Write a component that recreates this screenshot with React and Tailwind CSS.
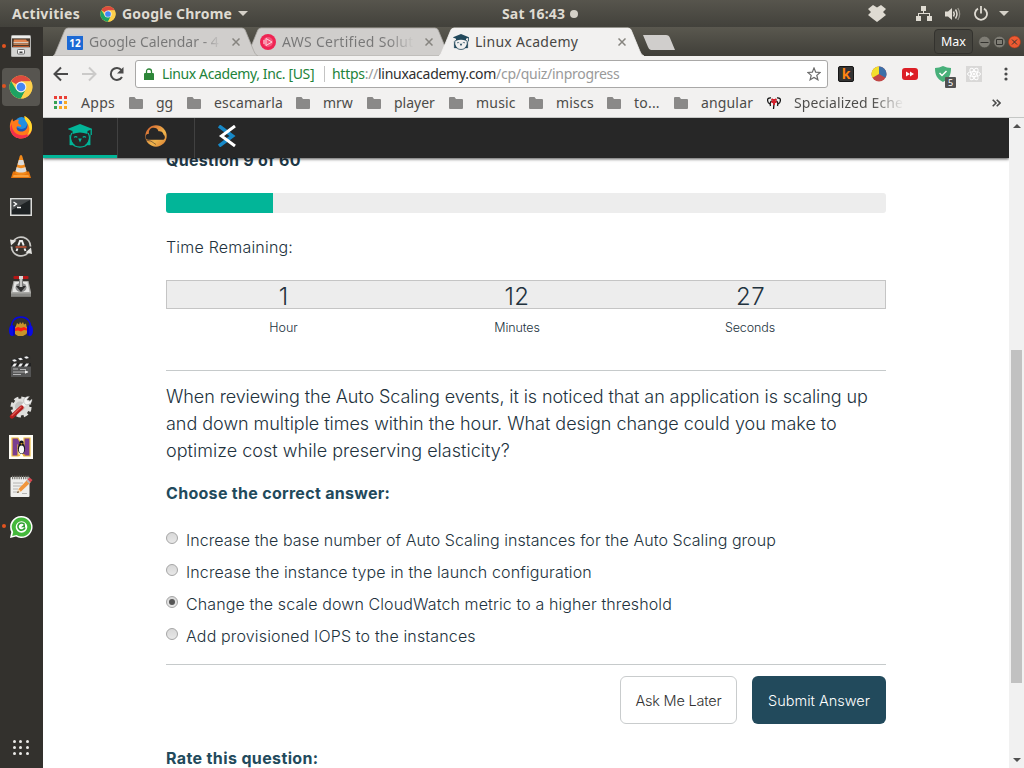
import React from "react";

const ui = "font-['Noto_Sans','Open_Sans',sans-serif]";

function ChromeIcon({ className }) {
  return (
    <svg viewBox="0 0 24 24" className={className}>
      <circle cx="12" cy="12" r="11.500" fill="#fdd04b" />
      <path d="M12 12 2.040 6.250A11.500 11.500 0 0 1 21.960 6.250L12 6.600Z" fill="#dd4b3e" />
      <path d="M2.040 6.250A11.500 11.500 0 0 0 12 23.500L16.700 14.700 12 12 7.300 14.700Z" fill="#1da362" />
      <path d="M12 6.600H21.960A11.500 11.500 0 0 1 12 23.500L16.800 14.600Z" fill="#fdd04b" />
      <circle cx="12" cy="12" r="5.400" fill="#f4f4f4" />
      <circle cx="12" cy="12" r="4.300" fill="#4587f3" />
    </svg>
  );
}

function Owl({ className }) {
  return (
    <svg viewBox="0 0 24 24" className={className} fill="none" stroke="currentColor">
      <path d="M12 0 24.500 5 19.500 7V10Q12 7 4.500 10V7L-.5 5Z" fill="currentColor" stroke="none" />
      <path d="M23.200 5v6" strokeWidth="1.300" />
      <path d="M1.800 11V21H6.500C4 19 2.500 16 1.800 11ZM22.200 11V21H17.500C20 19 21.500 16 22.200 11Z" fill="currentColor" strokeWidth=".4" />
      <path d="M3.800 9C.8 15 3.500 23.200 12 23.200S23.200 15 20.200 9" strokeWidth="1.200" />
      <path d="M6 13.400Q7.800 12 9.300 13.300M14.700 13.300Q16.200 12 18 13.400" strokeWidth="1.100" />
      <path d="M10.200 14.500H13.800L12 18.500Z" fill="currentColor" stroke="none" />
    </svg>
  );
}

function Files() {
  return (
    <svg viewBox="0 0 24 24" className="size-6">
      <rect x="2" y="0" width="20" height="22" rx="1.500" fill="#b5b5b3" />
      <path d="M3 1H21V3H3Z" fill="#eeeeec" />
      <rect x="3" y="3.500" width="18" height="9" fill="#4c3a2c" />
      <path d="M5 4.500H17L18 6H19.500V7H4.500Z" fill="#e08450" />
      <path d="M4.500 7.200H19.500V8.200H4.500Z" fill="#fbeee0" />
      <path d="M4.500 8.500H19.500V9.800H4.500Z" fill="#e8935e" />
      <path d="M4 11H20V12H4Z" fill="#b9572a" />
      <rect x="3" y="12.500" width="18" height="8.500" fill="#d4d4d2" />
      <rect x="8.500" y="14.500" width="7" height="4.500" rx=".8" fill="#f4f4f4" stroke="#6c6c6c" />
      <path d="M10.500 16.500H13.500V18H10.500Z" fill="#444" />
    </svg>
  );
}

function Firefox() {
  return (
    <svg viewBox="0 0 24 24" className="size-6">
      <circle cx="12" cy="12.500" r="9.500" fill="#1b55b6" />
      <circle cx="12.500" cy="8" r="6" fill="#1f8fe2" />
      <path d="M3.500 3.500C.5 7 .2 13 2 17c2 4.500 6 6.500 10 6.500 6 0 11-4.500 11-11C23 7 20 3.500 15.500 1c0 3 2.500 4 3 8 .5 5-3 8-7 7.500C8 16 7 13.500 8 11.500c1.500-.5 3 .5 4 0 1-.8-.5-2-2-2.300C9 8 9 6 10 5 7 4.500 5.500 5.500 5 6.500 4 6 3.500 5 3.500 3.500Z" fill="#ff7a1a" />
      <path d="M2 17c2 4.500 6 6.500 10 6.500 5 0 9-3 10.500-7.500C19 20 15 21 11 20 6 19 3 15 2.500 9 1 12 1.200 15 2 17Z" fill="#f4304b" />
      <path d="M15.500 1c5 2.500 7.800 6.500 7.500 12-.3 4-2.500 6.500-5 7.500 2.500-3 3-7 1.500-10C18 7 15 5 15.500 1Z" fill="#ffd92e" />
    </svg>
  );
}

function Vlc() {
  return (
    <svg viewBox="0 0 24 24" className="size-6">
      <path d="M4 16.500H20L22 23H2Z" fill="#e8760d" />
      <path d="M4.500 20H19.500L20 22H4Z" fill="#f9a13e" />
      <path d="M12 0C11 0 10.800 1 10.500 2L6 18c2 2.500 10 2.500 12 0L13.500 2C13.200 1 13 0 12 0Z" fill="#f28a1c" />
      <path d="M9.800 5H14.200L15.500 9.500C14 10.500 10 10.500 8.500 9.500ZM7.700 12C10 13.500 14 13.500 16.300 12L17.500 16C15 18 9 18 6.500 16Z" fill="#dcdcdc" />
    </svg>
  );
}

function TerminalIcon() {
  return (
    <svg viewBox="0 0 24 24" className="size-6">
      <rect x="1" y="3" width="22" height="18" fill="#dcdcda" />
      <rect x="2.500" y="4.500" width="19" height="15" fill="#1e2224" />
      <path d="M3 5H21L3 15Z" fill="#474a4c" />
      <path d="M4.500 7 7.500 9 4.500 11.200M8 12.500H12" fill="none" stroke="#fff" strokeWidth="1.300" />
    </svg>
  );
}

function Updater() {
  return (
    <svg viewBox="0 0 24 24" className="size-6" fill="none">
      <path d="M4 6.500A9.500 9.500 0 0 1 21.500 11.500M20 16.500A9.500 9.500 0 0 1 2.500 11.500" stroke="#c9c8c5" strokeWidth="1.800" />
      <path d="M1 4.500 7.500 5.500 2 10.500ZM23 19 16.500 17.500 22 12.500Z" fill="#e4e3e0" />
      <path d="M9.300 10.500 11 6H13L14.700 10.500M8.500 13.500 7.500 16M15.500 13.500 16.500 16" stroke="#eee" strokeWidth="2" />
      <path d="M6.500 12H17.500" stroke="#df5a3a" strokeWidth="1.300" />
    </svg>
  );
}

function DiskTool() {
  return (
    <svg viewBox="0 0 24 24" className="size-6">
      <path d="M4.500 6H19.500L22 17V21.500H2V17Z" fill="#a9a9a6" />
      <path d="M5.500 7H18.500L20.500 17H3.500Z" fill="#e5e5e3" />
      <ellipse cx="12" cy="12.500" rx="5.500" ry="4.500" fill="#8b8b8b" />
      <path d="M10 5H14V11H17L12 17 7 11H10Z" fill="#2f2f2f" />
      <rect x="10.500" y="2" width="3" height="10" fill="#c6c6c4" />
      <rect x="4.500" y="1" width="15" height="3" rx="1" fill="#b41616" />
      <rect x="10" y="1" width="4" height="3" fill="#d8d8d6" />
      <path d="M2 18.500H22V21.500H2Z" fill="#8a8a87" />
    </svg>
  );
}

function Audacity() {
  return (
    <svg viewBox="0 0 24 24" className="size-6">
      <path d="M5 14 7 11 8 8 10 9.500 11 7 12.500 9 14 7 15 9.500 17 8.500 17.500 11.500 19 14 17.500 19 14 21H9L6 19Z" fill="#c8942a" />
      <path d="M6 13.500 9 12 12 13 15 12 18 13.500 18 15.500 15 15 12 16.500 9 15.500 6 16Z" fill="#ff1e12" />
      <path d="M2.500 14C2 6 6 2 12 2S22 6 21.500 14" fill="none" stroke="#0808e0" strokeWidth="1.600" />
      <ellipse cx="3" cy="15.500" rx="3" ry="5.500" fill="#0a0ae6" />
      <ellipse cx="21" cy="15.500" rx="3" ry="5.500" fill="#0a0ae6" />
      <path d="M5 10.500V20.500M19 10.500V20.500" stroke="#0505b8" strokeWidth="1.600" />
    </svg>
  );
}

function Clapper() {
  return (
    <svg viewBox="0 0 24 24" className="size-6">
      <path d="M2 4.500 20.500 0 21.500 3.500 3 8Z" fill="#2c2c2c" />
      <path d="M3 5 6 4.300 8 6 5 6.800ZM9 3.600 12 2.800 14 4.500 11 5.200ZM15 2 18 1.200 20 2.900 17 3.700Z" fill="#f1f1f1" />
      <rect x="2" y="8" width="20" height="14" fill="#555" />
      <rect x="2" y="8" width="20" height="3.500" fill="#222" />
      <path d="M3 11.500 5 8.500H8L6 11.500ZM9 11.500 11 8.500H14L12 11.500ZM15 11.500 17 8.500H20L18 11.500Z" fill="#f1f1f1" />
      <path d="M4 14H9M4 17H19M4 19.500H12M11 14.500H17" stroke="#b4b4b4" strokeWidth="1" />
      <path d="M16 15.300 19.500 17 16 18.700Z" fill="#eee" />
    </svg>
  );
}

function Tweaks() {
  return (
    <svg viewBox="0 0 24 24" className="size-6">
      <circle cx="12" cy="12" r="9" fill="none" stroke="#e0e0de" strokeWidth="3.200" strokeDasharray="4.300 2.770" />
      <circle cx="12" cy="12" r="8.500" fill="#dededc" />
      <circle cx="11" cy="11.500" r="5" fill="#c2c2c0" />
      <path d="M12 13 17 7.500" stroke="#f2f2f2" strokeWidth="3.400" />
      <path d="M15 7.500C14 3.500 17 .8 20.500 1.500L18 4.500 20 6.500 23 4C23.500 8 20 10.500 16.500 9.500Z" fill="#f4f4f4" stroke="#8d8d8b" strokeWidth=".4" />
      <path d="M3 21.500 12.500 12.500" stroke="#b51d1d" strokeWidth="4.300" strokeLinecap="round" />
      <path d="M3 20.500 12 12" stroke="#e05a55" strokeWidth="1.200" strokeLinecap="round" />
    </svg>
  );
}

function PenguinN() {
  return (
    <svg viewBox="0 0 24 24" className="size-6">
      <rect width="24" height="24" fill="#fffdf6" />
      <path d="M3 3H9L15 14V3H21V21H15L9 11V21H3Z" fill="#7a3d8f" stroke="#eebc3b" strokeWidth="1.200" />
      <ellipse cx="12.500" cy="13.500" rx="3.600" ry="5.500" fill="#17171c" />
      <circle cx="12.500" cy="7.800" r="2.200" fill="#17171c" />
      <ellipse cx="12.500" cy="14.500" rx="2.600" ry="4" fill="#f6f6f6" />
      <path d="M11.300 8.300H13.700L12.500 9.800ZM8.500 19.500H11.800L10 21.500ZM13.500 19.500H16.500L15 21.500Z" fill="#f5b321" />
    </svg>
  );
}

function TextEditor() {
  return (
    <svg viewBox="0 0 24 24" className="size-6">
      <rect x="1.500" y="2" width="19" height="20" rx="1" fill="#efefed" />
      <path d="M3 2.500H20" stroke="#77756f" strokeWidth="3.500" strokeDasharray="1.200 1" />
      <path d="M4 8H14M4 11H13M4 14H9M4 17H8M13 18.500H18" stroke="#b4b4b2" strokeWidth="1" />
      <path d="M8 18 9.500 14 18.500 4.500 21.500 7.500 12 16.500Z" fill="#f0963c" />
      <path d="M9.500 14 12 16.500 8 18Z" fill="#f4dcb8" />
      <path d="M8 18 9 16 10 17.200Z" fill="#222" />
      <path d="M18.500 4.500 20.500 2.500 23.500 5 21.500 7.500Z" fill="#d94850" />
      <path d="M17.200 5.800 18.500 4.500 21.500 7.500 20.200 8.700Z" fill="#b8b8b8" />
    </svg>
  );
}

function ChatIcon() {
  return (
    <svg viewBox="0 0 24 24" className="size-6">
      <path d="M12.500 1A11 11 0 1 1 7 21.500L1 23 2.300 17A11 11 0 0 1 12.500 1Z" fill="#fff" />
      <path d="M12.500 2.500A9.500 9.500 0 1 1 7.500 20L3.200 21 4.200 17A9.500 9.500 0 0 1 12.500 2.500Z" fill="#44b83b" />
      <circle cx="12.500" cy="12" r="5.800" fill="#fff" />
      <path d="M15.500 9.500A3.600 3.600 0 1 0 16 12.500" fill="none" stroke="#2f9f30" strokeWidth="1.600" />
      <path d="M12 12.300H16V9Z" fill="#2f9f30" />
    </svg>
  );
}

const dock = [
  { Icon: Files, running: true },
  { Icon: () => <ChromeIcon className="size-6" />, running: true, active: true },
  { Icon: Firefox },
  { Icon: Vlc },
  { Icon: TerminalIcon },
  { Icon: Updater },
  { Icon: DiskTool },
  { Icon: Audacity },
  { Icon: Clapper },
  { Icon: Tweaks },
  { Icon: PenguinN },
  { Icon: TextEditor },
  { Icon: ChatIcon, running: true },
];

function TopBar() {
  return (
    <header className={`${ui} flex h-[27px] shrink-0 items-center bg-linear-to-b from-[#57554d] to-[#42413b] text-[14px] leading-[27px] font-bold text-[#dfdbd2]`}>
      <span className="ml-3 w-[88px] whitespace-nowrap tracking-[0.300px]">Activities</span>
      <ChromeIcon className="size-4" />
      <span className="ml-[6px] w-[112px] whitespace-nowrap tracking-[0.200px]">Google Chrome</span>
      <svg viewBox="0 0 10 5" className="ml-[4px] h-[5px] w-[10px]"><path d="M0 0H10L5 5Z" fill="#d5d1c8" /></svg>
      <span className="ml-[254px] w-[67px] whitespace-nowrap tracking-[0.150px]">Sat 16:43</span>
      <i className="ml-[1px] size-2 rounded-full bg-[#d5d1c8]" />
      <svg viewBox="0 0 18 17" className="ml-[290px] h-[17px] w-[18px]" fill="#dfdbd2">
        <path d="M5 0 9 2.500 13 0 18 4 15 7 18 10 13 14 9 17 5 14 0 10 3 7 0 4Z" />
      </svg>
      <svg viewBox="0 0 16 15" className="ml-[30px] h-[15px] w-4" fill="#dfdbd2">
        <path d="M5 0H10V5H8V7H14V10H16V15H11V10H13V8H3V10H5V15H0V10H2V7H7V5H5Z" />
      </svg>
      <svg viewBox="0 0 16 14" className="ml-[13px] h-[14px] w-4" fill="none" stroke="#dfdbd2">
        <path d="M0 4.500H3L7 1V13L3 9.500H0Z" fill="#dfdbd2" stroke="none" />
        <path d="M8.500 4.500Q10 7 8.500 9.500" strokeWidth="1.500" />
        <path d="M10.500 2.500Q13.500 7 10.500 11.500" strokeWidth="1.500" />
        <path d="M12.800 1Q16.500 7 12.800 13" strokeWidth="1.300" opacity=".5" />
      </svg>
      <svg viewBox="0 0 14 15" className="ml-[13px] h-[15px] w-[14px]" fill="none" stroke="#dfdbd2" strokeWidth="1.800">
        <path d="M4 2.600A6 6 0 1 0 10 2.600M7 0V7.500" />
      </svg>
      <svg viewBox="0 0 10 5" className="ml-[11px] h-[5px] w-[10px]"><path d="M0 0H10L5 5Z" fill="#d5d1c8" /></svg>
    </header>
  );
}

function Dock() {
  return (
    <nav className="flex w-[43px] shrink-0 flex-col bg-[#33312d]">
      {dock.map(({ Icon, running, active }, i) => (
        <div key={i} className="-mt-px mb-px flex h-10 items-center">
          <i className={`size-1 shrink-0 translate-x-[2px] rounded-full ${running ? "bg-[#e2531f]" : ""}`} />
          <div className={`-ml-[2px] mt-px flex h-[38px] w-[38px] items-center justify-center rounded ${active ? "bg-[#575550]" : ""}`}>
            <Icon />
          </div>
        </div>
      ))}
      <div className="mt-auto mb-[13px] ml-[13px] grid w-4 grid-cols-3 gap-[3px]">
        {Array.from({ length: 9 }, (_, i) => <i key={i} className="size-[3px] rounded-full bg-[#ecebe8]" />)}
      </div>
    </nav>
  );
}

function Tab({ icon, title, active, className, titleClass }) {
  return (
    <div className={`relative flex h-[29px] w-[205px] shrink-0 items-center ${className}`}>
      <svg viewBox="0 0 205 29" className="absolute inset-0 h-[29px] w-[205px]">
        <path d="M0 29C2 28 2 26 4 22L11 5Q12 1 15 1H189Q192 1 193 5L200 22C202 27 203 28 205 29Z" fill={active ? "#f2f1f0" : "#d0cecc"} stroke={active ? "#f2f1f0" : "#a8a6a2"} strokeWidth=".8" />
      </svg>
      <div className="relative ml-[14px] flex items-center">
        {icon}
        <span className={`ml-[6px] w-[132px] overflow-hidden text-[14px] leading-5 whitespace-nowrap ${titleClass}`}>{title}</span>
        <svg viewBox="0 0 8 8" className="ml-[11px] size-2"><path d="M.5 .5 7.500 7.500M7.500 .5 .5 7.500" stroke="#86847f" strokeWidth="1.500" /></svg>
      </div>
    </div>
  );
}

function TabStrip() {
  return (
    <div className="flex h-[29px] shrink-0 bg-linear-to-b from-[#5a584f] to-[#403f39]">
      <Tab
        className="z-10 ml-[10px]"
        title="Google Calendar - 4"
        titleClass="bg-linear-to-r from-[#777] from-85% to-[#d0cecc] bg-clip-text text-transparent"
        icon={<span className="flex size-4 items-center justify-center rounded-[1px] border-t-2 border-[#c4cbd4] bg-[#1c69d4] text-[10px] leading-none font-bold text-white">12</span>}
      />
      <Tab
        className="-ml-3"
        title="AWS Certified Solut"
        titleClass="bg-linear-to-r from-[#777] from-80% to-[#d0cecc] bg-clip-text text-transparent tracking-[0.300px]"
        icon={
          <svg viewBox="0 0 16 16" className="size-4">
            <circle cx="8" cy="8" r="8" fill="#ef2453" />
            <circle cx="8" cy="8" r="5" fill="#f5567b" />
            <path d="M6 4.500 12 8 6 11.500ZM4 6V10" fill="none" stroke="#ffd5df" />
          </svg>
        }
      />
      <Tab className="z-20 -ml-3" active title="Linux Academy" titleClass="text-[#484744] tracking-[0.280px]" icon={<Owl className="size-4 text-[#22495c]" />} />
      <svg viewBox="0 0 32 15" className="mt-2 -ml-px h-[15px] w-8"><path d="M0 0H23Q26 0 27 3L32 15H8Q6 15 5 12Z" fill="#d0cecc" /></svg>
      <div className="mt-[2px] ml-auto flex h-[25px] w-[39px] items-center justify-center rounded border border-[#33322e] bg-[#45443e] pt-px text-[12.500px] text-white">Max</div>
      <svg viewBox="0 0 44 14" className="mt-[8px] mr-[3px] ml-[4px] h-[14px] w-[44px]" fill="none" stroke="#34332f">
        <circle cx="7.500" cy="7" r="5.800" fill="#7f7d75" stroke="#4a4943" strokeWidth=".6" />
        <circle cx="22.500" cy="7" r="5.800" fill="#7f7d75" stroke="#4a4943" strokeWidth=".6" />
        <circle cx="37.500" cy="7" r="6" fill="#ee5a32" stroke="#a5391a" strokeWidth=".6" />
        <path d="M3.500 7.500H11.500M19.500 4.500H25.500V9.500H19.500ZM35 4.500 40 9.500M40 4.500 35 9.500" />
      </svg>
    </div>
  );
}

function Toolbar() {
  return (
    <div className="flex h-9 shrink-0 items-center bg-[#f2f1f0]">
      <svg viewBox="0 0 76 16" className="ml-[10px] h-4 w-[76px]" fill="none" stroke="#4a4a4a" strokeWidth="2">
        <path d="M15 8H2M8 1.500 1.500 8 8 14.500" />
        <path d="M29 8H42M36 1.500 42.500 8 36 14.500" stroke="#cbcac9" />
        <path d="M68.500 4.200A6 6 0 1 0 69 11" />
        <path d="M70.500 1V7.500H64Z" fill="#4a4a4a" stroke="none" />
      </svg>
      <div className="ml-[6px] flex h-7 w-[693px] items-center rounded-[3px] border border-[#a9a8a7] bg-white text-[14px] whitespace-nowrap">
        <svg viewBox="0 0 10 12" className="ml-[8px] h-3 w-[10px]"><path d="M1 5H9Q10 5 10 6V12H0V6Q0 5 1 5Z" fill="#2d8639" /><path d="M2.500 6V3.500Q2.500 1 5 1T7.500 3.500V6" fill="none" stroke="#2d8639" strokeWidth="1.300" /></svg>
        <span className="mb-[2px] ml-[8px] w-[153px] tracking-[-0.370px] text-[#22833a]">Linux Academy, Inc. [US]</span>
        <i className="ml-[9px] h-4 w-px bg-[#c4c4c4]" />
        <span className="mb-[2px] ml-[7px] tracking-[-0.280px] text-[#9a9a9a]"><span className="text-[#22833a]">https</span>://<span className="text-[#2f2f2f]">linuxacademy.com</span>/cp/quiz/inprogress</span>
        <svg viewBox="0 0 14 14" className="mr-[6px] ml-auto size-[14px]"><path d="M7 1 8.700 5.200 13.200 5.500 9.800 8.400 10.900 12.800 7 10.400 3.100 12.800 4.200 8.400 .8 5.500 5.300 5.200Z" fill="none" stroke="#6a6a6a" strokeWidth="1.200" /></svg>
      </div>
      <span className="ml-[10px] flex size-4 items-center justify-center rounded-[2px] border border-[#161616] bg-[#333] font-['Open_Sans',sans-serif] text-[14px] leading-none font-bold text-[#ff8412]">k</span>
      <svg viewBox="0 0 16 16" className="ml-[17px] size-4"><circle cx="8" cy="8" r="7.500" fill="#c14646" /><path d="M8 8V.5A7.500 7.500 0 0 0 1.500 11.700Z" fill="#f3e02c" /><path d="M8 8V.5A7.500 7.500 0 0 1 14.500 11.700Z" fill="#3c6fa8" /></svg>
      <svg viewBox="0 0 16 12" className="ml-[15px] h-3 w-4"><rect width="16" height="12" rx="3" fill="#dc1f26" /><path d="M4 3.500 8 6 4 8.500ZM8 3.500 12 6 8 8.500Z" fill="#fff" /></svg>
      <div className="relative ml-[17px] size-4">
        <svg viewBox="0 0 16 16" className="size-4"><path d="M0 2Q4 2 8 0 12 2 16 2C16 9 14 13 8 16 2 13 0 9 0 2Z" fill="#48b07a" /><path d="M4.500 7 7 9.500 11.500 5" fill="none" stroke="#fff" strokeWidth="1.500" /></svg>
        <span className="absolute top-[11px] left-[10px] flex h-[11px] w-[11px] items-center justify-center rounded-[1px] bg-[#525252] text-[9px] leading-none text-white">5</span>
      </div>
      <svg viewBox="0 0 16 16" className="ml-[15px] size-4" fill="none" stroke="#fff"><rect width="16" height="16" fill="#d9d8d7" stroke="none" /><ellipse cx="8" cy="8" rx="6.500" ry="2.500" /><ellipse cx="8" cy="8" rx="6.500" ry="2.500" transform="rotate(60 8 8)" /><ellipse cx="8" cy="8" rx="6.500" ry="2.500" transform="rotate(120 8 8)" /><circle cx="8" cy="8" r="1" fill="#fff" /></svg>
      <svg viewBox="0 0 4 14" className="ml-[22px] h-[14px] w-1" fill="#4a4a4a"><circle cx="2" cy="2" r="1.600" /><circle cx="2" cy="7" r="1.600" /><circle cx="2" cy="12" r="1.600" /></svg>
    </div>
  );
}

const Folder = () => (
  <svg viewBox="0 0 14 12" className="h-3 w-[14px] shrink-0"><path d="M1 0H5.500L7 2H13Q14 2 14 3V11Q14 12 13 12H1Q0 12 0 11V1Q0 0 1 0Z" fill="#8a8988" /></svg>
);

const bookmarks = [
  ["gg", "w-[18px]"],
  ["escamarla", "w-[69px] tracking-[0.200px]"],
  ["mrw", "w-[31px]"],
  ["player", "w-[42px]"],
  ["music", "w-[40px] tracking-[0.200px]"],
  ["miscs", "w-[38px] tracking-[0.200px]"],
  ["to...", "w-[27px] tracking-[0.200px]"],
  ["angular", "w-[53px] tracking-[0.150px]"],
];

const appDots = ["bg-[#ea3f36]", "bg-[#ea3f36]", "bg-[#ea3f36]", "bg-[#35a153]", "bg-[#4285f4]", "bg-[#f9a825]", "bg-[#35a153]", "bg-[#f9a825]", "bg-[#f9a825]"];

function Bookmarks() {
  return (
    <div className="flex h-[26px] shrink-0 items-center gap-[13px] border-b border-[#c5c7c5] bg-[#f2f1f0] pb-[4px] pl-[11px] text-[14px] whitespace-nowrap text-[#4c4b49]">
      <div className="grid size-[13px] shrink-0 grid-cols-3 gap-[2px]">
        {appDots.map((c, i) => <i key={i} className={c} />)}
      </div>
      <span className="ml-px w-[35px] tracking-[0.300px]">Apps</span>
      {bookmarks.map(([name, w]) => (
        <React.Fragment key={name}>
          <Folder />
          <span className={`shrink-0 ${w}`}>{name}</span>
        </React.Fragment>
      ))}
      <svg viewBox="0 0 14 12" className="h-3 w-[14px] shrink-0" fill="none" stroke="#151515" strokeWidth="1.300">
        <path d="M4 .8Q0 .5 .7 4 1 6.500 3 7M10 .8Q14 .5 13.300 4 13 6.500 11 7M5 4Q2.500 4.500 3.500 9M9 4Q11.500 4.500 10.500 9M7 7 6.500 12" />
        <path d="M4.500 2 9.500 5.500M9.500 2 4.500 5.500M7 2V8" stroke="#d1202b" strokeWidth="2" />
      </svg>
      <span className="w-[110px] shrink-0 overflow-hidden bg-linear-to-r from-[#4c4b49] from-70% to-[#f2f1f0] bg-clip-text tracking-[0.100px] text-transparent">Specialized Eche</span>
      <svg viewBox="0 0 9 8" className="mr-[23px] ml-auto h-2 w-[9px] shrink-0" fill="none" stroke="#4a4a4a" strokeWidth="1.600"><path d="M.7 .7 4 4 .7 7.300M4.700 .7 8 4 4.700 7.300" /></svg>
    </div>
  );
}

function SiteHeader() {
  return (
    <div className="z-10 flex h-10 shrink-0 bg-[#272727] shadow-[0_1px_3px_rgba(0,0,0,0.7)]">
      <div className="flex w-[75px] justify-center border-r border-[#414141]">
        <div className="flex w-full items-start justify-center border-b-[3px] border-[#02b598] pt-[6px]"><Owl className="size-6 text-[#02b598]" /></div>
      </div>
      <div className="flex w-[77px] justify-center border-r border-[#414141] pt-[7px]">
        <svg viewBox="0 0 22 22" className="size-[22px]">
          <defs><linearGradient id="ring" x1="0" y1="0" x2="1" y2="1"><stop stopColor="#d45b2c" /><stop offset=".6" stopColor="#eeb44c" /><stop offset="1" stopColor="#d9772f" /></linearGradient></defs>
          <circle cx="11" cy="11" r="10.700" fill="url(#ring)" />
          <path d="M3.500 14.800A3 3 0 0 1 4 8.800 4.800 4.800 0 0 1 13.500 6.300 4 4 0 0 1 18.500 9.500 3.200 3.200 0 0 1 18.500 14.800Z" fill="#272727" />
          <path d="M1 15Q6 15 11 19.500" stroke="#272727" strokeWidth=".5" fill="none" />
        </svg>
      </div>
      <svg viewBox="0 0 18 22" className="mt-[7px] ml-[23px] h-[22px] w-[18px]" fill="none">
        <path d="M1 1 14.500 11 1 21" stroke="#1789c8" strokeWidth="3.600" />
        <path d="M17 1 3.500 11 17 21" stroke="#fff" strokeWidth="3" />
      </svg>
    </div>
  );
}

const options = [
  ["Increase the base number of Auto Scaling instances for the Auto Scaling group", "tracking-[0.050px]"],
  ["Increase the instance type in the launch configuration", "tracking-[0.130px]"],
  ["Change the scale down CloudWatch metric to a higher threshold", "tracking-[0.110px]"],
  ["Add provisioned IOPS to the instances", "tracking-[0.150px]"],
];

function Quiz() {
  return (
    <main className="ml-[123px] flex w-[720px] flex-col font-['Inter','Lato',sans-serif] font-light text-[#22323d]">
      <h1 className="-mt-[8px] h-[20px] text-[16px] leading-5 font-bold tracking-[0.300px] text-[#1f3947]">Question 9 of 60</h1>
      <div className="mt-[23px] h-5 overflow-hidden rounded-[3px] bg-[#ededed]"><div className="h-5 w-[107px] bg-[#02b598]" /></div>
      <p className="mt-[24px] text-[16px] leading-5 tracking-[0.200px]">Time Remaining:</p>
      <div className="mt-[23px] flex h-[29px] border border-[#c5c5c5] bg-[#ededed] text-center text-[24px] leading-[31px]">
        <span className="w-[233px]">1</span><span className="w-[234px] tracking-[0.500px]">12</span><span className="w-[233px] tracking-[0.500px]">27</span>
      </div>
      <div className="mt-[9px] flex text-center text-[12.500px] leading-5">
        <span className="w-[235px]">Hour</span><span className="w-[232px] tracking-[-0.100px]">Minutes</span><span className="w-[234px] tracking-[-0.100px]">Seconds</span>
      </div>
      <hr className="mt-[32px] border-[#c6cacb]" />
      <p className="mt-[12px] text-[18px] leading-[27px] whitespace-nowrap">
        <span className="tracking-[-0.090px]">When reviewing the Auto Scaling events, it is noticed that an application is scaling up</span><br />
        <span className="tracking-[-0.030px]">and down multiple times within the hour. What design change could you make to</span><br />
        <span className="tracking-[0.030px]">optimize cost while preserving elasticity?</span>
      </p>
      <h2 className="mt-[19px] text-[16px] leading-5 font-bold tracking-[0.300px] text-[#224a5c]">Choose the correct answer:</h2>
      <div className="mt-[21px] flex flex-col">
        {options.map(([text, tracking], i) => (
          <label key={i} className="flex h-8 items-center">
            <span className="-mt-[5px] flex size-3 shrink-0 items-center justify-center rounded-full border border-[#a5a5a5] bg-linear-to-b from-[#d8d8d8] to-[#e8e8e8]">
              {i === 2 && <i className="size-[6px] rounded-full bg-[#555]" />}
            </span>
            <span className={`ml-2 text-[16px] whitespace-nowrap ${tracking}`}>{text}</span>
          </label>
        ))}
      </div>
      <hr className="mt-[12px] border-[#c6cacb]" />
      <div className="mt-[11px] flex h-12 justify-end gap-[15px] text-[14.500px]">
        <button className="w-[117px] rounded-[6px] border border-[#c9cccd] pt-[2px] tracking-[-0.200px] text-[#333]">Ask Me Later</button>
        <button className="w-[134px] rounded-[6px] bg-[#224a5c] pt-[2px] text-white">Submit Answer</button>
      </div>
      <h2 className="mt-[24px] text-[16px] leading-5 font-bold tracking-[0.370px] whitespace-nowrap text-[#224a5c]">Rate this question:</h2>
    </main>
  );
}

export default function App() {
  return (
    <div className="flex h-[768px] w-[1024px] flex-col overflow-hidden bg-white">
      <TopBar />
      <div className="flex min-h-0 flex-1">
        <Dock />
        <div className={`${ui} flex min-w-0 flex-1 flex-col`}>
          <TabStrip />
          <Toolbar />
          <Bookmarks />
          <div className="flex min-h-0 flex-1">
            <div className="flex min-w-0 flex-1 flex-col overflow-hidden">
              <SiteHeader />
              <Quiz />
            </div>
            <div className="flex w-[15px] shrink-0 flex-col items-center bg-[#f1f1f1]">
              <svg viewBox="0 0 8 4" className="mt-[6px] h-1 w-2"><path d="M0 4H8L4 0Z" fill="#505050" /></svg>
              <div className="mt-[222px] h-[333px] w-[11px] bg-[#c1c1c1]" />
              <svg viewBox="0 0 8 4" className="mt-auto mb-[6px] h-1 w-2"><path d="M0 0H8L4 4Z" fill="#505050" /></svg>
            </div>
          </div>
        </div>
      </div>
    </div>
  );
}
